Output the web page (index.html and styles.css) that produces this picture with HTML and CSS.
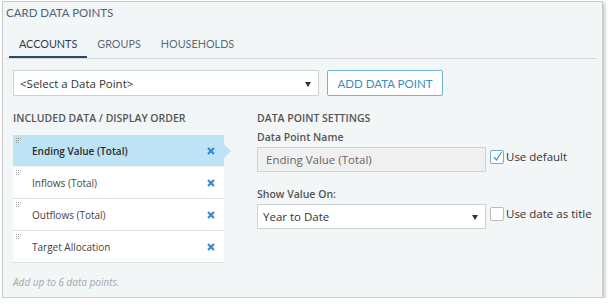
FILE: index.html
```html
<!DOCTYPE html>
<html lang="en">
<head>
    <meta charset="UTF-8">
    <title>Card Data Points</title>
    <link rel="stylesheet" href="styles.css">
</head>
<body>
    <div class="panel">
        <div class="panel-title">CARD DATA POINTS</div>

        <div class="tabs">
            <div class="tab active">ACCOUNTS</div>
            <div class="tab">GROUPS</div>
            <div class="tab">HOUSEHOLDS</div>
        </div>

        <div class="add-row">
            <div class="select wide">
                <span>&lt;Select a Data Point&gt;</span>
                <span class="caret"></span>
            </div>
            <button class="add-btn">ADD DATA POINT</button>
        </div>

        <div class="columns">
            <div class="col-left">
                <div class="heading">INCLUDED DATA / DISPLAY ORDER</div>
                <ul class="point-list">
                    <li class="point selected">
                        <svg class="grip" width="7" height="6" viewBox="0 0 7 6"><path d="M0 0h1v1H0zM2 0h1v1H2zM4 0h1v1H4zM0 2h1v1H0zM2 2h1v1H2zM0 4h1v1H0zM2 4h1v1H2z" fill="#8f9a9f"/></svg>
                        <span class="point-name">Ending Value (Total)</span>
                        <svg class="remove" width="8" height="8" viewBox="0 0 8 8"><path d="M1 1L7 7M7 1L1 7" stroke="#2f8fd6" stroke-width="2.2"/></svg>
                    </li>
                    <li class="point">
                        <svg class="grip" width="7" height="6" viewBox="0 0 7 6"><path d="M0 0h1v1H0zM2 0h1v1H2zM4 0h1v1H4zM0 2h1v1H0zM2 2h1v1H2zM0 4h1v1H0zM2 4h1v1H2z" fill="#9a9a9a"/></svg>
                        <span class="point-name">Inflows (Total)</span>
                        <svg class="remove" width="8" height="8" viewBox="0 0 8 8"><path d="M1 1L7 7M7 1L1 7" stroke="#2f8fd6" stroke-width="2.2"/></svg>
                    </li>
                    <li class="point">
                        <svg class="grip" width="7" height="6" viewBox="0 0 7 6"><path d="M0 0h1v1H0zM2 0h1v1H2zM4 0h1v1H4zM0 2h1v1H0zM2 2h1v1H2zM0 4h1v1H0zM2 4h1v1H2z" fill="#9a9a9a"/></svg>
                        <span class="point-name">Outflows (Total)</span>
                        <svg class="remove" width="8" height="8" viewBox="0 0 8 8"><path d="M1 1L7 7M7 1L1 7" stroke="#2f8fd6" stroke-width="2.2"/></svg>
                    </li>
                    <li class="point">
                        <svg class="grip" width="7" height="6" viewBox="0 0 7 6"><path d="M0 0h1v1H0zM2 0h1v1H2zM4 0h1v1H4zM0 2h1v1H0zM2 2h1v1H2zM0 4h1v1H0zM2 4h1v1H2z" fill="#9a9a9a"/></svg>
                        <span class="point-name">Target Allocation</span>
                        <svg class="remove" width="8" height="8" viewBox="0 0 8 8"><path d="M1 1L7 7M7 1L1 7" stroke="#2f8fd6" stroke-width="2.2"/></svg>
                    </li>
                </ul>
                <div class="hint">Add up to 6 data points.</div>
            </div>

            <div class="col-right">
                <div class="heading">DATA POINT SETTINGS</div>
                <div class="label">Data Point Name</div>
                <div class="field-row">
                    <div class="text-input">Ending Value (Total)</div>
                    <label class="check">
                        <span class="box checked">
                            <svg width="11" height="11" viewBox="0 0 11 11"><path d="M2 6L4.5 9L9.5 1" fill="none" stroke="#4a8fd0" stroke-width="1.2"/></svg>
                        </span>
                        Use default
                    </label>
                </div>
                <div class="label gap">Show Value On:</div>
                <div class="field-row">
                    <div class="select narrow">
                        <span>Year to Date</span>
                        <span class="caret"></span>
                    </div>
                    <label class="check">
                        <span class="box"></span>
                        Use date as title
                    </label>
                </div>
            </div>
        </div>
    </div>
</body>
</html>
```

FILE: styles.css
```css
body {
    margin: 0;
    padding: 1px 0 0 2px;
    background: #ffffff;
    font-family: 'Open Sans', sans-serif;
    color: #333333;
}
.panel {
    width: 599px;
    height: 295px;
    border: 1px solid #c9cccf;
    background: #f3f6f7;
    box-shadow: 2px 2px 3px rgba(0, 0, 0, 0.22);
}
.panel-title {
    font-family: 'Lato', sans-serif;
    font-size: 11.5px;
    line-height: 16px;
    color: #4f6378;
    padding: 3px 0 0 3px;
}
.tabs {
    display: flex;
    margin: 9px 5px 0 3px;
    padding-left: 3px;
    border-bottom: 1px solid #d3d9dd;
}
.tab {
    font-family: 'Lato', sans-serif;
    font-size: 10.8px;
    line-height: 16px;
    color: #5d6b78;
    padding: 6px 10px 4px;
    border-bottom: 2px solid transparent;
}
.tab.active {
    color: #2d3d4d;
    border-bottom-color: #2c4a6a;
}
.add-row {
    display: flex;
    gap: 8px;
    margin: 11px 0 0 10px;
}
.select {
    box-sizing: border-box;
    display: flex;
    align-items: center;
    justify-content: space-between;
    background: #ffffff;
    border: 1px solid #cfd3d6;
    font-size: 11.5px;
    color: #333333;
}
.select.wide {
    width: 306px;
    height: 26px;
    padding: 0 7px 0 6px;
}
.select.narrow {
    width: 229px;
    height: 25px;
    padding: 0 7px 0 5px;
}
.caret {
    width: 0;
    height: 0;
    border-left: 3.5px solid transparent;
    border-right: 3.5px solid transparent;
    border-top: 5px solid #333333;
    margin-top: 2px;
}
.add-btn {
    box-sizing: border-box;
    width: 116px;
    height: 26px;
    background: #ffffff;
    border: 1px solid #6db3e0;
    border-radius: 2px;
    font-family: 'Lato', sans-serif;
    font-size: 11.5px;
    color: #3d8cc4;
    padding: 0;
}
.columns {
    display: flex;
    margin: 15px 0 0 10px;
}
.col-left {
    width: 218px;
}
.col-right {
    margin-left: 26px;
}
.heading {
    font-size: 10.5px;
    font-weight: 600;
    line-height: 14px;
    color: #555555;
}
.point-list {
    list-style: none;
    margin: 10px 0 0;
    padding: 0;
    width: 211px;
}
.point {
    position: relative;
    display: flex;
    align-items: center;
    height: 31px;
    background: #ffffff;
    border-bottom: 1px solid #dcdfe1;
    padding-left: 19px;
    padding-right: 9px;
    font-size: 10px;
    color: #444444;
}
.point.selected {
    background: #bee3f4;
    font-weight: 600;
    color: #2b2b2b;
    border-bottom-color: #f3f6f7;
}
.point.selected::after {
    content: '';
    position: absolute;
    right: -7px;
    top: 9px;
    border-top: 7px solid transparent;
    border-bottom: 7px solid transparent;
    border-left: 7px solid #bee3f4;
}
.grip {
    position: absolute;
    left: 3px;
    top: 3px;
}
.point-name {
    flex: 1;
}
.remove {
    display: block;
}
.hint {
    margin-top: 12px;
    font-size: 10px;
    font-style: italic;
    color: #a3a6a8;
}
.label {
    font-size: 10.5px;
    font-weight: 600;
    line-height: 14px;
    color: #555555;
    margin-top: 5px;
}
.label.gap {
    margin-top: 15px;
}
.field-row {
    display: flex;
    align-items: flex-start;
    margin-top: 3px;
}
.text-input {
    box-sizing: border-box;
    width: 229px;
    height: 25px;
    display: flex;
    align-items: center;
    padding-left: 8px;
    background: #f0f0f0;
    border: 1px solid #cfd1d3;
    font-size: 11.5px;
    color: #666666;
}
.check {
    display: flex;
    align-items: center;
    gap: 2px;
    margin-left: 4px;
    margin-top: 2px;
    font-size: 11.5px;
    color: #333333;
}
.box {
    box-sizing: border-box;
    width: 14px;
    height: 14px;
    border: 1px solid #b9bdc1;
    border-radius: 2px;
    background: #ffffff;
    display: flex;
    align-items: center;
    justify-content: center;
}
.box.checked {
    border-color: #7aa8d6;
}
```
